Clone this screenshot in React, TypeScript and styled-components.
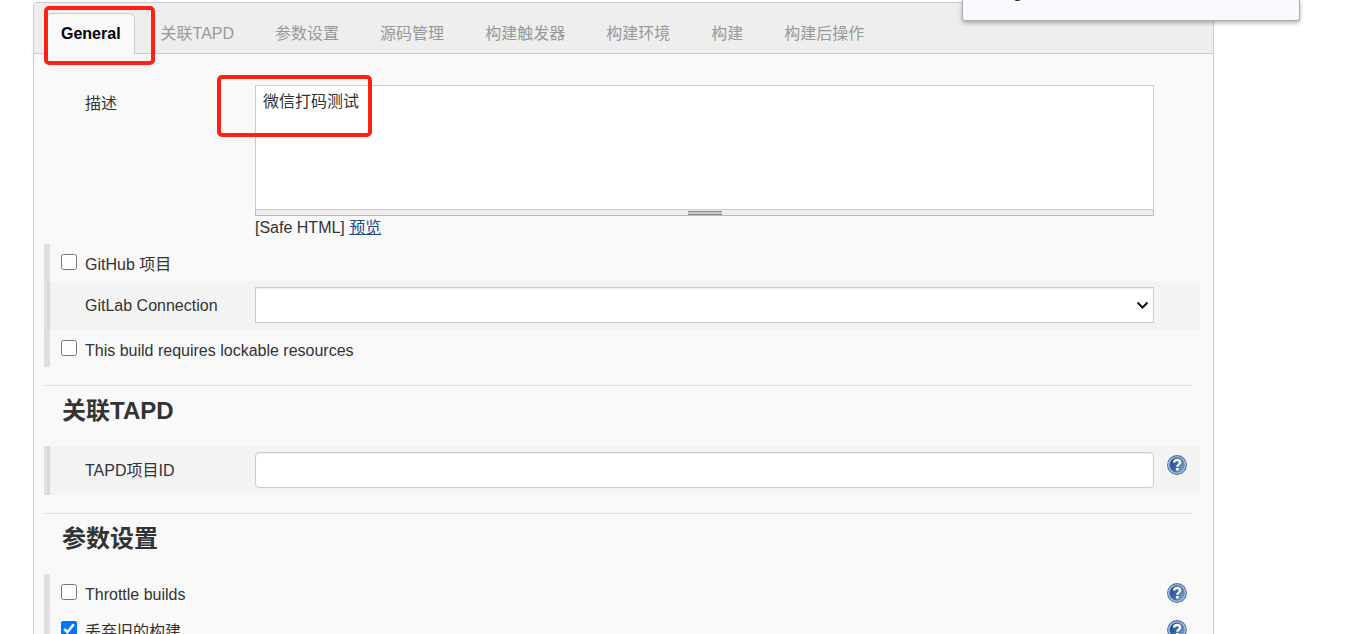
import React from "react";
import styled, { createGlobalStyle } from "styled-components";

const GlobalStyle = createGlobalStyle`
  html {
    scrollbar-width: none;
  }
  body {
    margin: 0;
    background: #fff;
    color: #333;
    font: 16px/24px "Liberation Sans", "Noto Sans CJK SC", sans-serif;
  }
  *, *::before, *::after {
    box-sizing: border-box;
  }
`;

const Page = styled.main`
  padding: 2px 134px 20px 33px;
`;

const Panel = styled.form`
  border: 1px solid #ccc;
  border-radius: 4px 0 0 0;
  background: #f9f9f9;
`;

const TabBar = styled.nav`
  display: flex;
  align-items: flex-end;
  height: 51px;
  padding-left: 13px;
  border-bottom: 1px solid #ccc;
  border-top-left-radius: 3px;
  background: #eee;
`;

const Tab = styled.button<{ $active?: boolean }>`
  position: relative;
  height: 41px;
  margin: 0 ${(p) => (p.$active ? "6px -1px 0" : "1px 0 0")};
  padding: ${(p) => (p.$active ? "0 13px" : "2px 20px 0")};
  border: ${(p) => (p.$active ? "1px solid #ccc" : "0 solid transparent")};
  border-bottom: 0;
  border-radius: 4px 6px 0 0;
  background: ${(p) => (p.$active ? "#f9f9f9" : "transparent")};
  color: ${(p) => (p.$active ? "#000" : "#999")};
  font: inherit;
  font-weight: ${(p) => (p.$active ? 700 : 400)};
  white-space: nowrap;
`;

const Highlight = styled.span<{ $inset: string }>`
  position: absolute;
  inset: ${(p) => p.$inset};
  border: 4px solid #ff2116;
  border-radius: 5px;
  pointer-events: none;
`;

const DescriptionHighlight = styled(Highlight)`
  width: 155px;
  height: 62px;
`;

const Group = styled.div`
  margin: 0 13px 0 10px;
  border-left: 6px solid #e0e0e0;
`;

const Row = styled.div<{ $shaded?: boolean }>`
  display: grid;
  grid-template-columns: 170px 1fr 46px;
  align-items: center;
  min-height: 49px;
  padding: 6px 0 7px 35px;
  ${(p) =>
    p.$shaded &&
    `
    margin-left: -3px;
    border-left: 3px solid #d9d9d9;
    background: #f3f3f3;
  `}
`;

const RowLabel = styled.label`
  padding-top: 2px;
`;

const DescriptionRow = styled(Row)`
  align-items: start;
  margin: 0 13px 0 16px;
  padding: 31px 0 4px 35px;
`;

const DescriptionLabel = styled.label`
  padding-top: 7px;
`;

const FieldBox = styled.div`
  position: relative;
  min-width: 0;
`;

const TextArea = styled.textarea`
  display: block;
  width: 100%;
  height: 125px;
  padding: 4px 7px;
  border: 1px solid #ccc;
  background: #fff;
  color: #333;
  font: inherit;
  resize: none;
  outline: none;
`;

const ResizeBar = styled.div`
  display: flex;
  justify-content: center;
  height: 6px;
  padding-top: 1px;
  border: 1px solid #bbb;
  border-top: 0;
  background: #eee;
`;

const Grip = styled.span`
  width: 34px;
  height: 4px;
  border: solid #888;
  border-width: 1px 0;
  background: #ccc;
`;

const PreviewLink = styled.a`
  color: #204a87;
`;

const controlStyle = `
  display: block;
  width: 100%;
  height: 36px;
  padding: 6px;
  border: 1px solid #ccc;
  background: #fff;
  color: #333;
  font: inherit;
  box-shadow: inset 0 1px 1px rgba(0, 0, 0, 0.075);
  outline: none;
`;

const TextInput = styled.input`
  ${controlStyle}
  border-radius: 4px;
`;

const Select = styled.select`
  ${controlStyle}
  border-radius: 0;
  appearance: none;
`;

const SelectArrow = styled.svg`
  position: absolute;
  top: 14px;
  right: 5px;
  pointer-events: none;
`;

const CheckRow = styled.div`
  display: flex;
  align-items: center;
  justify-content: space-between;
  height: 37px;
  padding: 0 13px 0 11px;
`;

const CheckLabel = styled.label`
  display: flex;
  gap: 8px;
  padding-top: 5px;
`;

const CheckBox = styled.input`
  width: 16px;
  height: 16px;
  margin: 1px 0 0;
`;

const HelpButton = styled.button`
  display: block;
  width: 20px;
  height: 20px;
  padding: 0;
  border: 0;
  background: none;
`;

const HelpCell = styled.div`
  align-self: start;
  padding: 3px 0 0 13px;
`;

const Section = styled.section`
  padding-top: 18px;
`;

const Heading = styled.h2`
  margin: 0 20px 0 9px;
  padding: 9px 19px 19px;
  border-top: 1px solid #ddd;
  font-size: 24px;
  line-height: 32px;
`;

const Popup = styled.aside`
  position: absolute;
  top: 0;
  right: 48px;
  display: flex;
  align-items: flex-end;
  width: 338px;
  height: 21px;
  padding: 0 0 15px 50px;
  overflow: hidden;
  border: 1px solid #aaafb3;
  border-top: 0;
  border-radius: 0 0 3px 3px;
  background: #f8f9fc;
  box-shadow: 0 2px 4px rgba(0, 0, 0, 0.3);
`;

const tabs = ["关联TAPD", "参数设置", "源码管理", "构建触发器", "构建环境", "构建", "构建后操作"];

function Help({ topic }: { topic: string }) {
  return (
    <HelpButton type="button" aria-label={`Help: ${topic}`}>
      <svg width="20" height="20" viewBox="0 0 20 20" fill="none">
        <defs>
          <linearGradient id="helpFill" x1="3" y1="6" x2="17" y2="15" gradientUnits="userSpaceOnUse">
            <stop stopColor="#1f4b8c" />
            <stop offset="0.5" stopColor="#3d69a8" />
            <stop offset="1" stopColor="#86a9d6" />
          </linearGradient>
        </defs>
        <circle cx="10" cy="10" r="9.4" fill="#b4c8e2" stroke="#4f74a8" strokeWidth="1.1" />
        <circle cx="10" cy="10" r="7.4" fill="url(#helpFill)" stroke="#5b80b4" strokeWidth="0.6" />
        <path d="M7 7.6C7.2 5.7 8.4 5 10.1 5c1.8 0 3 .9 3 2.4 0 2-2.7 2-2.7 4.4" stroke="#fff" strokeWidth="2.4" />
        <rect x="9" y="13" width="2.7" height="2.5" fill="#fff" />
      </svg>
    </HelpButton>
  );
}

function CheckOption({ label, checked, help }: { label: string; checked?: boolean; help?: boolean }) {
  return (
    <CheckRow>
      <CheckLabel>
        <CheckBox type="checkbox" defaultChecked={checked} />
        {label}
      </CheckLabel>
      {help && <Help topic={label} />}
    </CheckRow>
  );
}

export default function App() {
  return (
    <>
      <GlobalStyle />
      <Page>
        <Panel>
          <TabBar>
            <Tab type="button" $active>
              General
              <Highlight $inset="-8px -21px -11px -4px" />
            </Tab>
            {tabs.map((name) => (
              <Tab type="button" key={name}>
                {name}
              </Tab>
            ))}
          </TabBar>

          <DescriptionRow>
            <DescriptionLabel htmlFor="description">描述</DescriptionLabel>
            <FieldBox>
              <TextArea id="description" defaultValue="微信打码测试" />
              <ResizeBar>
                <Grip />
              </ResizeBar>
              [Safe HTML] <PreviewLink href="#preview">预览</PreviewLink>
              <DescriptionHighlight $inset="-10px auto auto -38px" />
            </FieldBox>
          </DescriptionRow>

          <Group>
            <CheckOption label="GitHub 项目" />
            <Row $shaded>
              <RowLabel htmlFor="gitlab">GitLab Connection</RowLabel>
              <FieldBox>
                <Select id="gitlab" />
                <SelectArrow width="13" height="9" viewBox="0 0 13 9" fill="none">
                  <path d="M1.5 1.5L6.5 6.5L11.5 1.5" stroke="#111" strokeWidth="2" />
                </SelectArrow>
              </FieldBox>
            </Row>
            <CheckOption label="This build requires lockable resources" />
          </Group>

          <Section>
            <Heading>关联TAPD</Heading>
            <Group>
              <Row $shaded>
                <RowLabel htmlFor="tapd">TAPD项目ID</RowLabel>
                <TextInput id="tapd" type="text" />
                <HelpCell>
                  <Help topic="TAPD项目ID" />
                </HelpCell>
              </Row>
            </Group>
          </Section>

          <Section>
            <Heading>参数设置</Heading>
            <Group>
              <CheckOption label="Throttle builds" help />
              <CheckOption label="丢弃旧的构建" checked help />
            </Group>
          </Section>
        </Panel>
      </Page>
      <Popup>g</Popup>
    </>
  );
}
